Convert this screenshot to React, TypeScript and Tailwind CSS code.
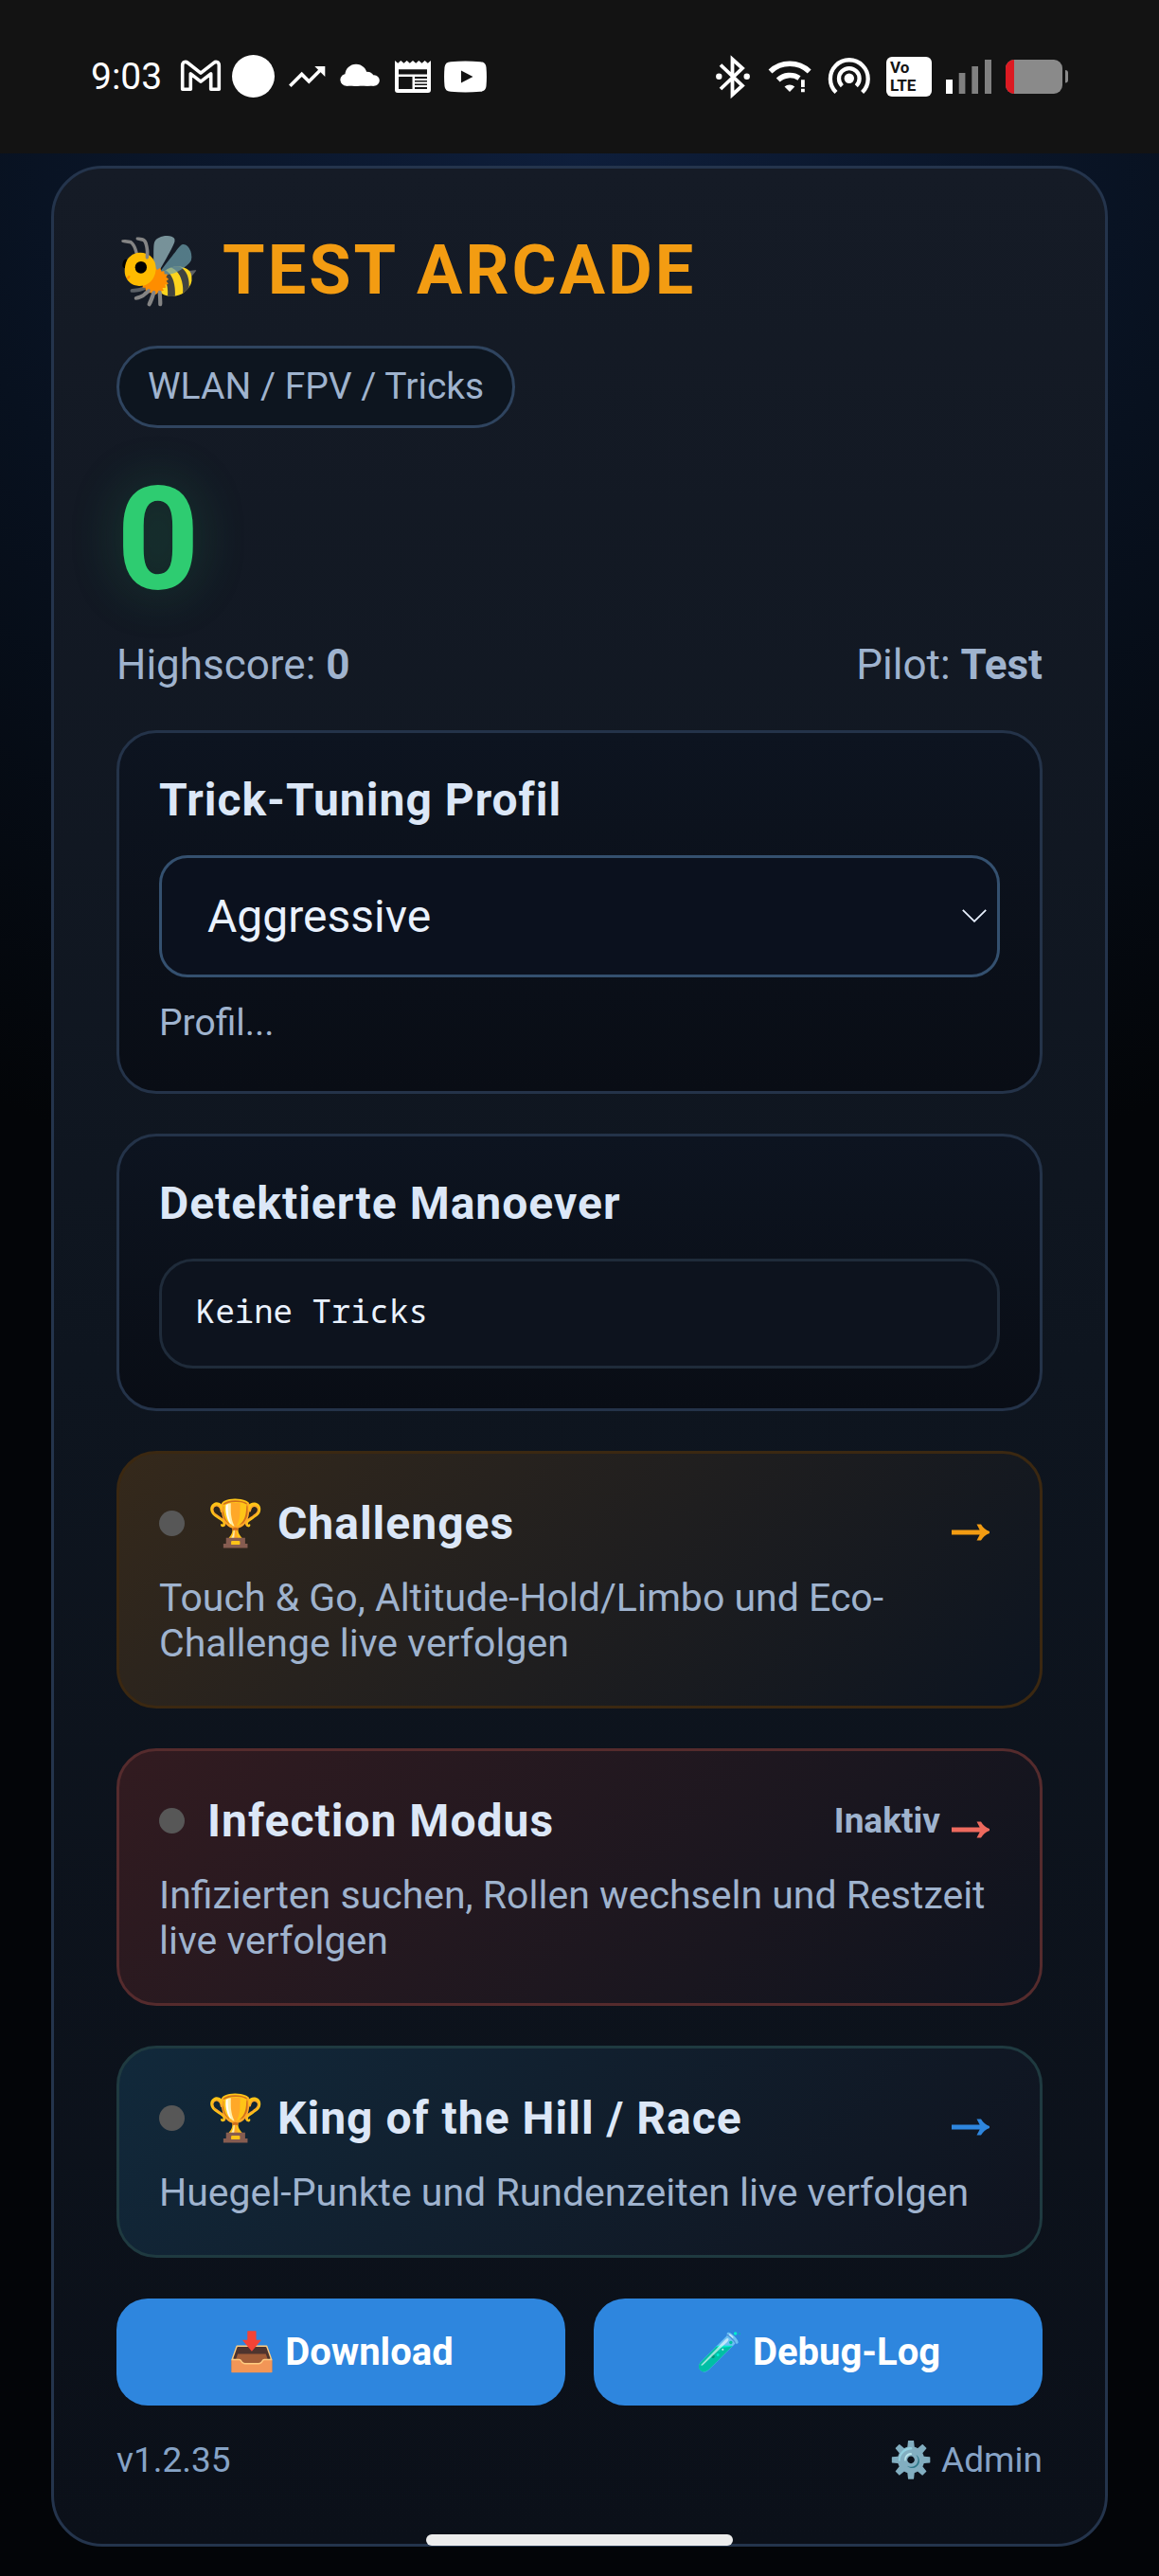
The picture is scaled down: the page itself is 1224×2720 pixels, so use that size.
import { useState, type ReactNode } from 'react';
import { clsx } from 'clsx';

const profiles = ['Smooth', 'Normal', 'Aggressive'];

const modes = [
  {
    title: '🏆 Challenges',
    text: 'Touch & Go, Altitude-Hold/Limbo und Eco-Challenge live verfolgen',
    status: '',
    card: 'border-[#3b2811] from-[#35291b] to-[#0c1420]',
    arrow: 'text-[#f39c12]',
  },
  {
    title: 'Infection Modus',
    text: 'Infizierten suchen, Rollen wechseln und Restzeit live verfolgen',
    status: 'Inaktiv',
    card: 'border-[#552b2d] from-[#321b20] to-[#0d131e]',
    arrow: 'text-[#ee6a5e]',
  },
  {
    title: '🏆 King of the Hill / Race',
    text: 'Huegel-Punkte und Rundenzeiten live verfolgen',
    status: '',
    card: 'border-[#1f3a40] from-[#11293b] to-[#0f131e]',
    arrow: 'text-[#2e86de]',
  },
];

function NotificationIcons() {
  return (
    <div className="flex items-center gap-2.5">
      <svg viewBox="0 0 46 48" className="h-12 w-[46px]" fill="none" stroke="white" strokeWidth="3.6" strokeLinejoin="round">
        <path d="M3.7 37.3V12c0-3.2 3-4.6 5.5-2.7L23 20.2 36.8 9.3c2.5-1.9 5.5-.5 5.5 2.7v25.3h-8.6V20.8L23 29.2l-10.7-8.4v16.5z" />
      </svg>
      <svg viewBox="0 0 46 48" className="h-12 w-[46px]" fill="white">
        <circle cx="22.5" cy="23.5" r="22.5" />
      </svg>
      <svg viewBox="0 0 46 48" className="h-12 w-[46px]" fill="white">
        <path d="M5.3 33.7 17.7 21.4l7.6 7.6 12.5-12.5" fill="none" stroke="white" strokeWidth="3.6" />
        <path d="M31.3 13h11v11z" />
      </svg>
      <svg viewBox="0 0 46 48" className="h-12 w-[46px]" fill="white">
        <circle cx="8.8" cy="27.3" r="6.4" />
        <circle cx="19" cy="22.3" r="11.6" />
        <circle cx="31" cy="26.2" r="7.5" />
        <circle cx="38" cy="28" r="5.8" />
        <path d="M8.8 25h29v8.7h-29z" />
      </svg>
      <svg viewBox="0 0 46 48" className="h-12 w-[46px]" fill="white">
        <path d="M4 7l3.2 2.8L10.3 7l3.2 2.8L16.7 7l3.1 2.8L23 7l3.2 2.8L29.3 7l3.2 2.8L35.7 7l3.1 2.8L42 7v31a3 3 0 0 1-3 3H7a3 3 0 0 1-3-3z" />
        <path fill="#131313" d="M8 16.2h30v5.2H8zM8 24h14.5v13H8zM25 24h13v2H25zM25 28h13v1.6H25zM25 31.6h13v1.5H25zM25 35h13v2H25z" />
      </svg>
      <svg viewBox="0 0 46 48" className="h-12 w-[46px]">
        <path fill="white" d="M7 8.2Q22.5 7 38 8.2Q44 8.5 44.5 14Q45.4 24 44.5 34Q44 39.5 38 39.8Q22.5 41 7 39.8Q1 39.5.5 34Q-.4 24 .5 14Q1 8.5 7 8.2z" />
        <path fill="#131313" d="M18 17.5l12.5 6.6L18 30.5z" />
      </svg>
    </div>
  );
}

function SystemIcons() {
  return (
    <div className="flex items-center gap-[15px]">
      <svg viewBox="0 0 48 48" className="size-12" fill="none" stroke="white" strokeWidth="3.8">
        <path d="M14 11.5l23 22L26.5 43V5.5L37 15 14 37" />
        <circle cx="12.3" cy="23.8" r="3.2" fill="white" stroke="none" />
        <circle cx="41.7" cy="23.8" r="3.2" fill="white" stroke="none" />
      </svg>
      <svg viewBox="0 0 48 48" className="size-12" fill="none" stroke="white" strokeWidth="5.6">
        <path d="M3.5 18.5A30 30 0 0 1 44.7 18.5" />
        <path d="M11.7 27.6A18 18 0 0 1 34 25.5" />
        <path d="M18.5 34.5a8.5 8.5 0 0 1 10.8 0L24 40z" fill="white" stroke="none" />
        <path d="M36 27.3h3.8V35H36zM36 36.8h3.8v3.4H36z" fill="white" stroke="none" />
      </svg>
      <svg viewBox="0 0 48 48" className="size-12" fill="none" stroke="white" strokeWidth="4.3">
        <circle cx="23.8" cy="25.7" r="5.2" fill="white" stroke="none" />
        <path d="M16.3 33.7a10.8 10.8 0 1 1 15 0" />
        <path d="M10 40.5a19.9 19.9 0 1 1 27.6 0" />
      </svg>
      <div className="flex h-[42px] w-12 flex-col justify-center rounded-md bg-white pl-1 font-[Roboto,sans-serif] text-[17px] leading-[19px] font-bold text-[#131313]">
        <p>
          Vo
          <br />
          LTE
        </p>
      </div>
      <svg viewBox="0 0 48 48" className="size-12" fill="#808080">
        <path fill="white" d="M0 27h7v15H0z" />
        <path d="M13.7 20h6.7v22h-6.7zM27.3 13H34v29h-6.7zM41 6h7v36h-7z" />
      </svg>
      <svg viewBox="0 0 66 48" className="h-12 w-[66px]" fill="#8a8a8a">
        <rect y="6" width="60" height="36" rx="9" />
        <path fill="#dc1a22" d="M9 6v36a9 9 0 0 1-9-9V15a9 9 0 0 1 9-9z" />
        <path d="M63 17q3 0 3 3v7.5q0 3-3 3z" />
      </svg>
    </div>
  );
}

function StatusBar() {
  return (
    <header className="flex h-[162px] items-center justify-between bg-[#131313] px-24">
      <div className="flex items-center gap-[18px] text-[39px] text-white">
        <span>9:03</span>
        <NotificationIcons />
      </div>
      <SystemIcons />
    </header>
  );
}

// sits a little below the title's middle line, like a text arrow
function Arrow({ className }: { className: string }) {
  return (
    <svg viewBox="0 0 40 36" className={clsx('mr-[11px] ml-3 h-9 w-10', className)} fill="currentColor" aria-hidden="true">
      <path d="M0 24.6h29.7l-3.2-6.1H31q3 5.2 9 7.6v1.8q-6 2.400-9 7.600h-4.500l3.200-6.100H0z" />
    </svg>
  );
}

function Panel({ children }: { children: ReactNode }) {
  return (
    <section className="mt-[42px] rounded-[42px] border-3 border-[#243349] bg-linear-to-b from-[#0d1420] to-[#090d15] p-[42px]">
      {children}
    </section>
  );
}

export default function App() {
  const [profile, setProfile] = useState('Aggressive');

  return (
    <div className="relative flex min-h-screen flex-col bg-[#030508] font-[Roboto,sans-serif] text-[#9fb3ce]">
      <StatusBar />

      <main className="flex-1 bg-[radial-gradient(110%_44%_at_50%_0%,#0e1e3b_0%,#08111f_50%,#030508_100%)] px-[54px] pt-[13px] pb-[31px]">
        <div className="rounded-[54px] border-3 border-[#24344c] bg-linear-to-b from-[#151b26] via-[#0e151f] to-[#0b1019] p-[66px]">
          <h1 className="text-[72px] leading-[84px] font-bold tracking-[3px] text-[#f39c12]">🐝 TEST ARCADE</h1>

          <div className="mt-[37px] flex">
            <span className="rounded-full border-3 border-[#2f445f] bg-[#0d151f] px-[30px] py-[18px] text-[39px] leading-[45px]">
              WLAN / FPV / Tricks
            </span>
          </div>

          <div className="mt-[41px] text-[153px] leading-none font-bold text-[#2ecc71] [text-shadow:0_0_54px_rgba(46,204,113,0.25)]">
            0
          </div>

          <div className="mt-[30px] flex justify-between text-[44px] leading-[53px]">
            <span>
              Highscore: <b>0</b>
            </span>
            <span>
              Pilot: <b>Test</b>
            </span>
          </div>

          <Panel>
            <label htmlFor="profile" className="block text-[48px] leading-[57px] font-bold tracking-[1px] text-[#dce7f7]">
              Trick-Tuning Profil
            </label>
            <div className="relative mt-[30px]">
              <select
                id="profile"
                value={profile}
                onChange={(e) => setProfile(e.target.value)}
                className="block h-[129px] w-full appearance-none rounded-[30px] border-3 border-[#34506f] bg-[#0b111e] px-12 text-[48px] text-[#eaf2ff]"
              >
                {profiles.map((p) => (
                  <option key={p}>{p}</option>
                ))}
              </select>
              <svg
                viewBox="0 0 26 14"
                className="pointer-events-none absolute top-[57px] right-3.5 h-3.5 w-[26px]"
                fill="none"
                stroke="#eaf2ff"
                strokeWidth="1.8"
              >
                <path d="M.8.8L13 12.8 25.2.8" />
              </svg>
            </div>
            <p className="mt-[18px] text-[39px] leading-[60px]">Profil...</p>
          </Panel>

          <Panel>
            <h2 className="text-[48px] leading-[57px] font-bold tracking-[1px] text-[#dce7f7]">Detektierte Manoever</h2>
            <div className="mt-[30px] min-h-[116px] rounded-[36px] border-3 border-[#1f2b3a] bg-[#0d131e] px-9 pt-[30px] font-['Noto_Sans_Mono','DejaVu_Sans_Mono',monospace] text-[34px] leading-[44px] text-[#eaf2ff]">
              Keine Tricks
            </div>
          </Panel>

          {modes.map((mode) => (
            <a
              key={mode.title}
              href="#"
              className={clsx('mt-[42px] block rounded-[42px] border-3 bg-linear-135 p-[42px]', mode.card)}
            >
              <div className="flex h-[63px] items-center">
                <span className="size-[27px] rounded-full bg-[#575757]" />
                <h2 className="ml-6 flex-1 text-[48px] leading-[63px] font-bold tracking-[1px] text-[#dce7f7]">{mode.title}</h2>
                <span className="text-[37px] font-bold">{mode.status}</span>
                <Arrow className={mode.arrow} />
              </div>
              <p className="mt-[23px] text-[41px] leading-[48px]">{mode.text}</p>
            </a>
          ))}

          <div className="mt-[43px] grid grid-cols-2 gap-[30px] text-[40px] font-bold text-white">
            <button type="button" className="h-[113px] rounded-[33px] bg-[#2e86de]">
              📥 Download
            </button>
            <button type="button" className="h-[113px] rounded-[33px] bg-[#2e86de]">
              🧪 Debug-Log
            </button>
          </div>

          <footer className="mt-[35px] flex justify-between text-[37px] leading-[45px] text-[#86a3c6]">
            <span>v1.2.35</span>
            <a href="#">⚙️ Admin</a>
          </footer>
        </div>
      </main>

      <div className="absolute bottom-8 left-1/2 h-3 w-[324px] -translate-x-1/2 rounded-full bg-[#ececec]" />
    </div>
  );
}
